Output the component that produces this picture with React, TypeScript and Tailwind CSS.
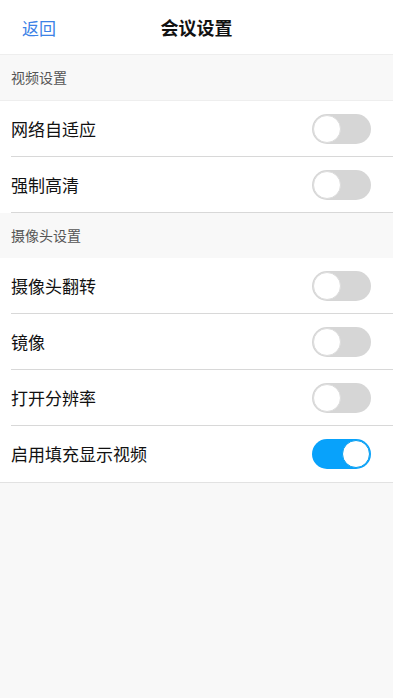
import { useState } from 'react'

type Item = { key: string; label: string; on: boolean }

const groups: { title: string; items: Item[] }[] = [
  {
    title: '视频设置',
    items: [
      { key: 'adaptive', label: '网络自适应', on: false },
      { key: 'hd', label: '强制高清', on: false },
    ],
  },
  {
    title: '摄像头设置',
    items: [
      { key: 'flip', label: '摄像头翻转', on: false },
      { key: 'mirror', label: '镜像', on: false },
      { key: 'res', label: '打开分辨率', on: false },
      { key: 'fill', label: '启用填充显示视频', on: true },
    ],
  },
]

function Toggle({ on, onChange }: { on: boolean; onChange: () => void }) {
  return (
    <button
      onClick={onChange}
      className={`flex h-[30px] w-[59px] items-center rounded-full p-[1px] ${on ? 'justify-end bg-[#08a2fb]' : 'justify-start bg-[#d6d6d6]'}`}
    >
      <span className={`h-[28px] w-[28px] rounded-full bg-white ${on ? 'border border-[#0a9ff0]' : 'border border-[#dcdcdc]'}`} />
    </button>
  )
}

export default function App() {
  const [state, setState] = useState<Record<string, boolean>>(() =>
    Object.fromEntries(groups.flatMap((g) => g.items.map((i) => [i.key, i.on])))
  )
  const toggle = (k: string) => setState((p) => ({ ...p, [k]: !p[k] }))

  return (
    <div className="min-h-[698px] bg-[#f8f8f8] font-['Noto_Sans_CJK_SC',sans-serif]">
      {/* 顶栏 */}
      <div className="relative flex h-[55px] items-center justify-center border-b border-[#eeeeee] bg-white">
        <button className="absolute left-[22px] top-1/2 -translate-y-1/2 text-[17px] leading-none text-[#3b82e6]">返回</button>
        <h1 className="text-[18px] font-bold leading-none text-[#111]">会议设置</h1>
      </div>

      {groups.map((g, gi) => {
        const lastGroup = gi === groups.length - 1
        return (
          <div key={g.title}>
            <div className="flex h-[45px] items-center px-[11px] text-[14px] text-[#555]">{g.title}</div>
            <div className={`bg-white ${gi === 0 ? 'border-t border-[#eeeeee]' : ''} ${lastGroup ? 'border-b border-[#e2e2e2]' : ''}`}>
              {g.items.map((it, i) => (
                <div key={it.key} className="pl-[11px]">
                  <div
                    className={`flex h-[56px] items-center justify-between pr-[22px] ${i < g.items.length - 1 || !lastGroup ? 'border-b border-[#d8d8d8]' : ''}`}
                  >
                    <span className="text-[17px] text-[#111]">{it.label}</span>
                    <Toggle on={state[it.key]} onChange={() => toggle(it.key)} />
                  </div>
                </div>
              ))}
            </div>
          </div>
        )
      })}
    </div>
  )
}
